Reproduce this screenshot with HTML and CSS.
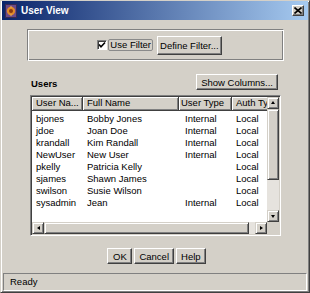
FILE: index.html
```html
<!DOCTYPE html>
<html lang="en">
<head>
    <meta charset="UTF-8">
    <title>User View</title>
    <link rel="stylesheet" href="styles.css">
</head>
<body>
    <div class="window">
        <div class="titlebar">
            <svg class="app-icon" width="12" height="14" viewBox="0 0 12 14">
                <rect x="0.5" y="0.5" width="11" height="13" fill="#6b4a8a" stroke="#3a2a50"/>
                <circle cx="6" cy="7" r="4.2" fill="#e08a2a"/>
                <circle cx="6" cy="7" r="2" fill="#8a3a10"/>
                <path d="M6 1.5 L7 3.5 L5 3.5 Z M6 12.5 L7 10.5 L5 10.5 Z" fill="#f0b050"/>
            </svg>
            <span class="title">User View</span>
            <button class="close-btn">
                <svg width="8" height="7" viewBox="0 0 8 7">
                    <path d="M0.5 0.5 L7.5 6.5 M7.5 0.5 L0.5 6.5" stroke="#000" stroke-width="1.6"/>
                </svg>
            </button>
        </div>

        <div class="content">
            <div class="filter-box">
                <label class="check">
                    <span class="checkbox">
                        <svg width="8" height="8" viewBox="0 0 8 8">
                            <path d="M1 3.5 L3 5.8 L7 1.5" stroke="#000" stroke-width="1.6" fill="none"/>
                        </svg>
                    </span>
                    <span class="check-label">Use Filter</span>
                </label>
                <button class="btn btn-tall">Define Filter...</button>
            </div>

            <div class="users-head">
                <span class="section-label">Users</span>
                <button class="btn">Show Columns...</button>
            </div>

            <div class="table-frame">
                <div class="table-main">
                    <div class="viewport">
                        <div class="grid-row table-header">
                            <div class="th">User Na...</div>
                            <div class="th">Full Name</div>
                            <div class="th th-type">User Type</div>
                            <div class="th">Auth Typ</div>
                        </div>
                        <div class="table-rows" id="rows"></div>
                    </div>
                    <div class="vscroll">
                        <div class="sb-btn"><span class="arrow up"></span></div>
                        <div class="sb-thumb v-thumb"></div>
                        <div class="sb-track"></div>
                        <div class="sb-btn"><span class="arrow down"></span></div>
                    </div>
                </div>
                <div class="hscroll-row">
                    <div class="hscroll">
                        <div class="sb-btn"><span class="arrow left"></span></div>
                        <div class="sb-thumb h-thumb"></div>
                        <div class="sb-track"></div>
                        <div class="sb-btn"><span class="arrow right"></span></div>
                    </div>
                    <div class="corner"></div>
                </div>
            </div>

            <div class="actions">
                <button class="btn btn-ok">OK</button>
                <button class="btn">Cancel</button>
                <button class="btn">Help</button>
            </div>
        </div>

        <div class="statusbar">Ready</div>
    </div>

    <script>
        // User list
        const users = [
            ['bjones', 'Bobby Jones', 'Internal', 'Local'],
            ['jdoe', 'Joan Doe', 'Internal', 'Local'],
            ['krandall', 'Kim Randall', 'Internal', 'Local'],
            ['NewUser', 'New User', 'Internal', 'Local'],
            ['pkelly', 'Patricia Kelly', '', 'Local'],
            ['sjames', 'Shawn James', '', 'Local'],
            ['swilson', 'Susie Wilson', '', 'Local'],
            ['sysadmin', 'Jean', 'Internal', 'Local']
        ];

        const rows = document.getElementById('rows');
        users.forEach(user => {
            const row = document.createElement('div');
            row.className = 'grid-row tr';
            user.forEach((value, i) => {
                const cell = document.createElement('div');
                cell.className = i === 2 ? 'td td-type' : 'td';
                cell.textContent = value;
                row.appendChild(cell);
            });
            rows.appendChild(row);
        });
    </script>
</body>
</html>
```

FILE: styles.css
```css
* {
    box-sizing: border-box;
}

body {
    margin: 0;
    font-family: 'Liberation Sans', Arial, sans-serif;
    font-size: 9.5px;
    color: #000;
    background-color: #d4d0c8;
}

.window {
    width: 310px;
    height: 293px;
    display: flex;
    flex-direction: column;
    background-color: #d4d0c8;
    border: 1px solid;
    border-color: #d4d0c8 #404040 #404040 #d4d0c8;
    box-shadow: inset 1px 1px #fff, inset -1px -1px #808080;
    overflow: hidden;
}

.titlebar {
    height: 19px;
    margin: 0 1px;
    display: flex;
    align-items: center;
    padding: 0 4px 0 3px;
    background: linear-gradient(90deg, #0a246a, #a6caf0);
}

.app-icon {
    flex: none;
}

.title {
    margin-left: 4px;
    color: #fff;
    font-weight: bold;
    font-size: 10px;
}

.close-btn {
    margin-left: auto;
    width: 12px;
    height: 11px;
    padding: 0;
    display: flex;
    align-items: center;
    justify-content: center;
    background-color: #d4d0c8;
    border: 1px solid;
    border-color: #fff #404040 #404040 #fff;
    box-shadow: inset -1px -1px #808080;
}

.content {
    padding: 9px 25px 0 26px;
    display: flex;
    flex-direction: column;
}

.filter-box {
    height: 32px;
    display: flex;
    align-items: center;
    justify-content: center;
    padding-left: 8px;
    border: 1px solid;
    border-color: #808080 #fff #fff #808080;
    box-shadow: inset 1px 1px #fff, inset -1px -1px #808080;
}

.check {
    display: flex;
    align-items: center;
    gap: 1px;
    margin-right: 4px;
}

.checkbox {
    width: 10px;
    height: 10px;
    display: flex;
    align-items: center;
    justify-content: center;
    background-color: #fff;
    border: 1px solid;
    border-color: #808080 #fff #fff #808080;
    box-shadow: inset 1px 1px #404040;
}

.check-label {
    height: 12px;
    line-height: 10px;
    padding: 0 1px;
    border: 1px solid #8a8a8a;
    border-radius: 2px;
}

.btn {
    height: 16px;
    padding: 0 4px;
    font-family: inherit;
    font-size: 9.5px;
    color: #000;
    background-color: #d4d0c8;
    border: 1px solid;
    border-color: #fff #404040 #404040 #fff;
    box-shadow: inset -1px -1px #808080;
}

.btn-tall {
    height: 19px;
    padding: 0 2px;
}

.users-head {
    margin-top: 13px;
    height: 16px;
    display: flex;
    align-items: center;
    justify-content: space-between;
    padding: 0 6px 0 4px;
}

.section-label {
    font-weight: bold;
    font-size: 9.5px;
    margin-top: 3px;
}

.table-frame {
    margin: 5px 3px 0 3px;
    height: 141px;
    display: flex;
    flex-direction: column;
    border: 1px solid;
    border-color: #808080 #fff #fff #808080;
    box-shadow: inset 1px 1px #404040, inset -1px -1px #d4d0c8;
    padding: 1px;
}

.table-main {
    flex: 1;
    display: flex;
    min-height: 0;
}

.viewport {
    flex: 1;
    background-color: #fff;
    overflow: hidden;
}

.grid-row {
    display: grid;
    grid-template-columns: 51px 96px 53px 60px;
}

.table-header {
    height: 14px;
    background-color: #d4d0c8;
}

.th {
    line-height: 12px;
    padding-left: 4px;
    white-space: nowrap;
    overflow: hidden;
    border-right: 1px solid #404040;
    border-bottom: 1px solid #404040;
    box-shadow: inset 1px 1px #fff, inset -1px -1px #808080;
}

.th-type {
    padding-left: 2px;
}

.table-rows {
    padding-top: 2px;
}

.tr {
    height: 12px;
}

.td {
    line-height: 12px;
    padding-left: 4px;
    white-space: nowrap;
    overflow: hidden;
}

.td-type {
    padding-left: 6px;
}

.vscroll {
    width: 12px;
    display: flex;
    flex-direction: column;
}

.hscroll-row {
    height: 12px;
    display: flex;
}

.hscroll {
    flex: 1;
    display: flex;
}

.corner {
    width: 12px;
    background-color: #d4d0c8;
}

.sb-btn {
    flex: none;
    width: 12px;
    height: 12px;
    display: flex;
    align-items: center;
    justify-content: center;
    background-color: #d4d0c8;
    border: 1px solid;
    border-color: #d4d0c8 #404040 #404040 #d4d0c8;
    box-shadow: inset 1px 1px #fff, inset -1px -1px #808080;
}

.sb-thumb {
    background-color: #d4d0c8;
    border: 1px solid;
    border-color: #d4d0c8 #404040 #404040 #d4d0c8;
    box-shadow: inset 1px 1px #fff, inset -1px -1px #808080;
}

.v-thumb {
    height: 71px;
}

.h-thumb {
    width: 205px;
}

.sb-track {
    flex: 1;
    background-color: #e6e3de;
}

.arrow {
    width: 0;
    height: 0;
    border: 2px solid transparent;
}

.arrow.up {
    border-bottom: 3px solid #000;
    border-top: 0;
    margin-top: -1px;
}

.arrow.down {
    border-top: 3px solid #000;
    border-bottom: 0;
}

.arrow.left {
    border-right: 3px solid #000;
    border-left: 0;
}

.arrow.right {
    border-left: 3px solid #000;
    border-right: 0;
}

.actions {
    margin-top: 12px;
    display: flex;
    justify-content: center;
    gap: 2px;
    padding-left: 2px;
}

.btn-ok {
    width: 25px;
}

.statusbar {
    margin: auto 2px 1px 2px;
    height: 18px;
    line-height: 16px;
    padding-left: 6px;
    border: 1px solid;
    border-color: #808080 #fff #fff #808080;
}
```
